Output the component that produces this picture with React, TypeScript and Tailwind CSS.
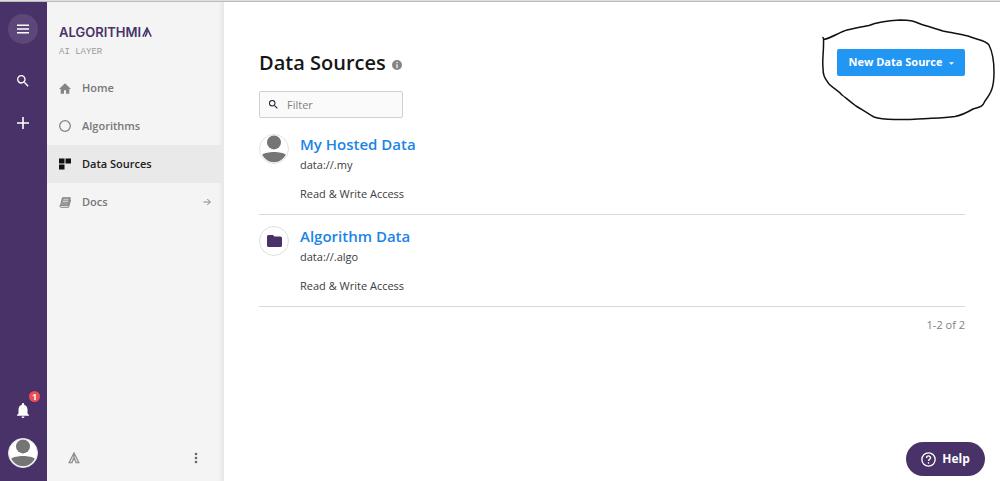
import type { ReactNode } from "react";

function Avatar({ className }: { className: string }) {
  return (
    <svg viewBox="0 0 30 30" className={className} aria-hidden="true">
      <circle cx="15" cy="15" r="14.5" fill="#fff" stroke="#e2e2e2" />
      <circle cx="15" cy="8.4" r="7" fill="#757575" />
      <path d="M3.2 20.8C7.5 17.2 22.5 17.2 26.8 20.8C24 25.8 20 28.2 15 28.2S6 25.8 3.2 20.8Z" fill="#757575" />
    </svg>
  );
}

function SearchIcon({ className }: { className: string }) {
  return (
    <svg viewBox="3 3 18 18" className={className} fill="currentColor" aria-hidden="true">
      <path d="M15.5 14h-.79l-.28-.27A6.47 6.47 0 0 0 16 9.5 6.5 6.5 0 1 0 9.5 16c1.61 0 3.09-.59 4.23-1.57l.27.28v.79l5 4.99L20.49 19l-4.99-5zm-6 0C7.01 14 5 11.99 5 9.5S7.01 5 9.5 5 14 7.01 14 9.5 11.99 14 9.5 14z" />
    </svg>
  );
}

function Rail() {
  return (
    <nav aria-label="Tools" className="flex w-[47px] shrink-0 flex-col items-center bg-[#493267] pt-3 pr-px pb-[13px] text-white">
      <button aria-label="Menu" className="flex size-[30px] items-center justify-center rounded-full bg-[#5d4779]">
        <svg viewBox="0 0 12 10" className="h-[10px] w-3" fill="currentColor" aria-hidden="true">
          <path d="M0 .5h12V2H0zM0 4.2h12v1.5H0zM0 8h12v1.5H0z" />
        </svg>
      </button>
      <button aria-label="Search" className="mt-[22px] flex size-[30px] items-center justify-center">
        <SearchIcon className="size-3" />
      </button>
      <button aria-label="Add" className="mt-3 flex size-[30px] items-center justify-center">
        <svg viewBox="0 0 12 12" className="size-3" fill="currentColor" aria-hidden="true">
          <path d="M5.2 0h1.6v5.2H12v1.6H6.8V12H5.2V6.8H0V5.2h5.2z" />
        </svg>
      </button>
      <div className="grow" />
      <button aria-label="Notifications" className="relative mb-4 flex size-6 items-center justify-center">
        <svg viewBox="4 2.5 16 19.5" preserveAspectRatio="none" className="h-[15px] w-3" fill="currentColor" aria-hidden="true">
          <path d="M12 22c1.1 0 2-.9 2-2h-4c0 1.1.9 2 2 2zm6-6v-5c0-3.07-1.64-5.64-4.5-6.32V4a1.5 1.5 0 0 0-3 0v.68C7.63 5.36 6 7.92 6 11v5l-2 2v1h16v-1l-2-2z" />
        </svg>
        <span className="absolute -top-[7px] -right-[5px] flex size-[11px] items-center justify-center rounded-full bg-[#ef4b54] text-[9px] leading-none font-bold">1</span>
      </button>
      <button aria-label="Account"><Avatar className="size-[30px]" /></button>
    </nav>
  );
}

function NavItem({ label, icon, active, external }: { label: string; icon: ReactNode; active?: boolean; external?: boolean }) {
  return (
    <a
      href="#"
      aria-current={active ? "page" : undefined}
      className={`flex h-[38px] items-center pr-[13px] pl-3 text-[11px] font-semibold ${active ? "bg-[#e9e9e9] text-[#202020]" : "text-[#777777]"}`}
    >
      <span className="flex w-[23px] shrink-0">{icon}</span>
      <span className="grow">{label}</span>
      {external && (
        <svg viewBox="0 0 8 8" className="size-2" fill="none" stroke="#858585" aria-hidden="true">
          <path d="M.5 4h6.8M4.3 1l3 3-3 3" />
        </svg>
      )}
    </a>
  );
}

function Sidebar() {
  return (
    <aside className="flex w-[177px] shrink-0 flex-col bg-[#f4f4f4] shadow-[inset_-6px_0_6px_-5px_rgba(0,0,0,0.09)]">
      <a href="#" aria-label="Algorithmia" className="mt-[22px] ml-3 flex items-center gap-px font-['Inter',sans-serif] text-[13px] leading-4 font-semibold text-[#493267]">
        <span>ALGORITHMI</span>
        <svg viewBox="0 0 10 10" className="size-[10px]" fill="none" stroke="currentColor" strokeWidth="1.5" aria-hidden="true">
          <path d="M.8 9.7 5 1l4.2 8.7M5 3.5v2l-1.8 4.2" />
        </svg>
      </a>
      <p className="mt-1 ml-3 font-['Liberation_Mono',monospace] text-[9px] leading-4 text-[#9a9a9a]">AI LAYER</p>
      <nav aria-label="Main" className="mt-[9px]">
        <NavItem label="Home" icon={
          <svg viewBox="0 0 12 11" className="h-[11px] w-3" fill="#858585" aria-hidden="true">
            <path d="M6 .3 0 6h1.7v4.7H5V7.2h2v3.5h3.3V6H12z" />
          </svg>
        } />
        <NavItem label="Algorithms" icon={
          <svg viewBox="0 0 12 12" className="size-3" aria-hidden="true">
            <circle cx="6" cy="6" r="5.3" fill="none" stroke="#858585" strokeWidth="1.3" />
          </svg>
        } />
        <NavItem label="Data Sources" active icon={
          <svg viewBox="0 0 12 12" className="size-3" fill="#111" aria-hidden="true">
            <path d="M0 .5h5.5v5H0zM6.5.5H12v5H6.5zM0 6.5h5.5v5H0z" />
          </svg>
        } />
        <NavItem label="Docs" external icon={
          <svg viewBox="0 0 12 11" className="h-[11px] w-3" aria-hidden="true">
            <path d="M3.4.7h8L9.3 8.5H1.5z" fill="#9b9b9b" stroke="#777" strokeWidth=".8" />
            <path d="M4.6 2.7h4.6M4 4.5h4.7" stroke="#e4e4e4" strokeWidth=".7" />
            <path d="M1.3 8.2C.4 9 1 10.3 2 10.3h7.5l2.2-7.6" fill="none" stroke="#777" strokeWidth=".9" />
          </svg>
        } />
      </nav>
      <div className="mt-auto mb-4 flex items-center justify-between pr-[26px] pl-[21px]">
        <svg viewBox="0 0 12 12" className="size-3" fill="none" stroke="#929292" strokeWidth="1.4" aria-hidden="true">
          <path d="M.8 11.2 6 1l5.200 10.200M6 2v3.500L3.600 11.200M6 5.500l2.400 5.700M1 10.600h2.700M8.300 10.600H11" />
        </svg>
        <button aria-label="More" className="flex h-[15px] items-center">
          <svg viewBox="0 0 4 12" className="h-3 w-1" fill="#666" aria-hidden="true">
            <circle cx="2" cy="2" r="1.3" /><circle cx="2" cy="6" r="1.3" /><circle cx="2" cy="10" r="1.3" />
          </svg>
        </button>
      </div>
    </aside>
  );
}

function Source({ icon, name, path }: { icon: ReactNode; name: string; path: string }) {
  return (
    <li className="flex h-[92px] gap-[11px] border-b border-[#d9d9d9] pt-[11px]">
      <div className="size-[30px] shrink-0">{icon}</div>
      <div className="text-[11px] leading-4 text-[#3c3c3c]">
        <h2 className="text-[15px] leading-5 font-semibold"><a href="#" className="text-[#1b84e7]">{name}</a></h2>
        <p className="mt-[3px]">{path}</p>
        <p className="mt-[13px]">Read &amp; Write Access</p>
      </div>
    </li>
  );
}

export default function App() {
  return (
    <div className="flex min-h-screen flex-col bg-white font-['Open_Sans',sans-serif]">
      <div className="h-[2px] border-t border-[#dedfdd] bg-[#babdb9]" />
      <div className="flex grow">
        <Rail />
        <Sidebar />
        <main className="min-w-0 grow pt-[47px] pr-[35px] pl-[35px]">
          <header className="flex items-start justify-between">
            <h1 className="flex items-center gap-[6px] text-[20px] leading-[28px] font-semibold text-[#161616]">
              Data Sources
              <svg viewBox="0 0 10 10" className="mt-[3px] size-[10px]" aria-hidden="true">
                <circle cx="5" cy="5" r="5" fill="#858585" />
                <path d="M4.4 2h1.2v1.3H4.4zM4.4 4.2h1.2V8H4.4z" fill="#fff" />
              </svg>
            </h1>
            <div className="relative">
              <button className="flex h-[27px] w-32 items-center justify-center gap-[6px] rounded-[2px] bg-[#2196f3] text-[11px] font-bold whitespace-nowrap text-white">
                New Data Source
                <svg viewBox="0 0 5 3" className="mt-[2px] h-[3px] w-[5px]" fill="currentColor" aria-hidden="true"><path d="M0 .3h5L2.500 2.800z" /></svg>
              </button>
              <svg viewBox="822 18 174 104" className="pointer-events-none absolute -top-[31px] -left-[15px] h-[104px] w-[174px] max-w-none" fill="none" stroke="#111" strokeWidth="1.5" strokeLinecap="round" strokeLinejoin="round" aria-hidden="true">
                <path d="M823 37.500L824 39.500C831 38 840 32 847 30C855 28 861 27 869 25.500C877 22 890 20.500 900 20C914 20 914 22 925 25.500C933 28 938 29 943 31C952 33 960 34 968 36C977 40 985 40 989 45C993 53 994 62 994 72C994 88 991 93 985 101C982 108 979 107 973 109C968 112 962 115 955 116.500C944 118 935 118 918 119C905 120 883 120 874 117C867 113 861 109 856 106C849 101 845 97 842 95C838 90 834 89 829 84C824 77 823 75 823 68C822 59 824 52 823.500 39" />
              </svg>
            </div>
          </header>
          <label className="mt-[14px] flex h-[27px] w-36 items-center gap-[9px] rounded-[2px] border border-[#d0d0d0] bg-[#fafafa] px-[9px] text-[#1c1c1c]">
            <SearchIcon className="size-[9px] shrink-0" />
            <input type="text" aria-label="Filter" placeholder="Filter" className="w-full min-w-0 bg-transparent text-[11px] leading-4 outline-none placeholder:text-[#808080]" />
          </label>
          <ul className="mt-[5px]">
            <Source name="My Hosted Data" path="data://.my" icon={<Avatar className="size-[30px]" />} />
            <Source name="Algorithm Data" path="data://.algo" icon={
              <span className="flex size-[30px] items-center justify-center rounded-full border border-[#dedede]">
                <svg viewBox="2 4 20 16" className="h-3 w-[15px]" fill="#493267" aria-hidden="true">
                  <path d="M10 4H4a2 2 0 0 0-2 2v12c0 1.100.9 2 2 2h16c1.100 0 2-.9 2-2V8a2 2 0 0 0-2-2h-8z" />
                </svg>
              </span>
            } />
          </ul>
          <p className="mt-[10px] text-right text-[11px] leading-4 text-[#808080]">1-2 of 2</p>
        </main>
      </div>
      <button className="fixed right-[15px] bottom-[5px] flex h-[34px] w-[79px] items-center justify-center gap-[6px] rounded-full bg-[#493267] text-[12px] font-bold text-white">
        <svg viewBox="0 0 16 16" className="size-[15px]" fill="none" stroke="currentColor" strokeWidth="1.400" aria-hidden="true">
          <circle cx="8" cy="8" r="7.100" />
          <path d="M5.900 6.300C5.900 3.500 10.200 3.600 10.200 6.200C10.200 7.700 8 7.800 8 9.600M8 10.900v1.500" />
        </svg>
        Help
      </button>
    </div>
  );
}
